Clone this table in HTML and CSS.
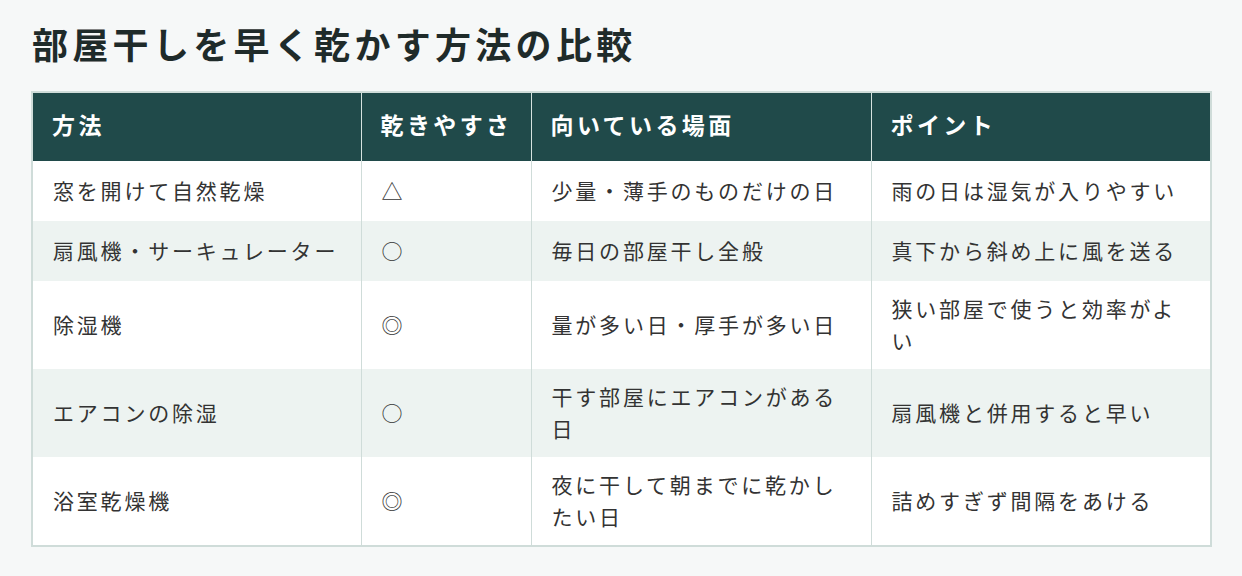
FILE: index.html
```html
<!DOCTYPE html>
<html lang="ja">
<head>
<meta charset="utf-8">
<title>部屋干しを早く乾かす方法の比較</title>
<link rel="stylesheet" href="styles.css">
</head>
<body>
<main class="page">
  <h1 class="title">部屋干しを早く乾かす方法の比較</h1>
  <table class="compare">
    <colgroup>
      <col class="c-method">
      <col class="c-ease">
      <col class="c-scene">
      <col class="c-point">
    </colgroup>
    <thead>
      <tr class="head">
        <th>方法</th>
        <th>乾きやすさ</th>
        <th>向いている場面</th>
        <th>ポイント</th>
      </tr>
    </thead>
    <tbody>
      <tr class="row short">
        <td class="name">窓を開けて自然乾燥</td>
        <td>△</td>
        <td>少量・薄手のものだけの日</td>
        <td>雨の日は湿気が入りやすい</td>
      </tr>
      <tr class="row short alt">
        <td class="name">扇風機・サーキュレーター</td>
        <td>○</td>
        <td>毎日の部屋干し全般</td>
        <td>真下から斜め上に風を送る</td>
      </tr>
      <tr class="row">
        <td class="name">除湿機</td>
        <td>◎</td>
        <td>量が多い日・厚手が多い日</td>
        <td>狭い部屋で使うと効率がよい</td>
      </tr>
      <tr class="row alt">
        <td class="name">エアコンの除湿</td>
        <td>○</td>
        <td>干す部屋にエアコンがある日</td>
        <td>扇風機と併用すると早い</td>
      </tr>
      <tr class="row">
        <td class="name">浴室乾燥機</td>
        <td>◎</td>
        <td>夜に干して朝までに乾かしたい日</td>
        <td>詰めすぎず間隔をあける</td>
      </tr>
    </tbody>
  </table>
</main>
</body>
</html>
```

FILE: styles.css
```css
html, body {
  margin: 0;
  padding: 0;
  background: #f6f8f8;
}
body {
  font-family: "Noto Sans CJK JP", "Noto Sans", sans-serif;
  color: #333;
}
.page {
  padding: 20px 30px 24px 31px;
}
.title {
  margin: 0 0 25px 1px;
  font-size: 36px;
  line-height: 46px;
  font-weight: 700;
  letter-spacing: 4.3px;
  color: #1f2b2a;
}
.compare {
  width: 1180px;
  border-collapse: collapse;
  table-layout: fixed;
  border: 2px solid #cfdcd9;
  background: #ffffff;
}
.c-method { width: 329px; }
.c-ease { width: 170px; }
.c-scene { width: 340px; }
.c-point { width: 340px; }
.compare th,
.compare td {
  border-left: 1px solid #cfdcd9;
  border-right: 1px solid #cfdcd9;
  text-align: left;
  vertical-align: middle;
  padding: 11px 20px 13px 20px;
  box-sizing: border-box;
}
.head th {
  background: #204a4a;
  color: #ffffff;
  font-size: 23px;
  line-height: 32px;
  font-weight: 700;
  letter-spacing: 3.4px;
  padding: 15px 19px 21px 19px;
  border-color: #d6e2df;
  white-space: nowrap;
  height: 68px;
}
.row td {
  font-size: 21px;
  line-height: 32px;
  letter-spacing: 2.8px;
  color: #333;
  height: 88px;
}
.row td.name {
  white-space: nowrap;
}
.row.short td {
  height: 60px;
}
.alt td {
  background: #edf3f1;
}
```
